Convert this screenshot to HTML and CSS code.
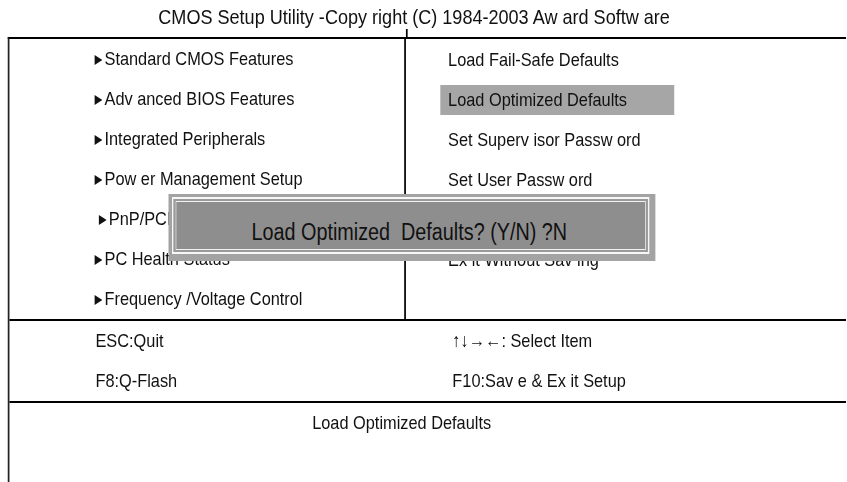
FILE: index.html
```html
<!DOCTYPE html>
<html lang="en">
<head>
  <meta charset="UTF-8">
  <title>CMOS Setup Utility</title>
  <link rel="stylesheet" href="styles.css">
</head>
<body>
  <div class="page">
    <div class="screen">
      <div class="title">CMOS Setup Utility -Copy right (C) 1984-2003 Aw ard Softw are</div>
      <div class="panel">
        <div class="menu">
          <ul class="menu-left">
            <li class="arrow">Standard CMOS Features</li>
            <li class="arrow">Adv anced BIOS Features</li>
            <li class="arrow">Integrated Peripherals</li>
            <li class="arrow">Pow er Management Setup</li>
            <li class="arrow indent">PnP/PCI Configurations</li>
            <li class="arrow">PC Health Status</li>
            <li class="arrow">Frequency /Voltage Control</li>
          </ul>
          <ul class="menu-right">
            <li><span>Load Fail-Safe Defaults</span></li>
            <li class="selected"><span>Load Optimized Defaults</span></li>
            <li><span>Set Superv isor Passw ord</span></li>
            <li><span>Set User Passw ord</span></li>
            <li><span>Save &amp; Exit Setup</span></li>
            <li><span>Ex it Without Sav ing</span></li>
            <li></li>
          </ul>
        </div>
        <div class="keys">
          <div>ESC:Quit</div>
          <div class="key-right">↑↓→←: Select Item</div>
          <div>F8:Q-Flash</div>
          <div class="key-right">F10:Sav e &amp; Ex it Setup</div>
        </div>
        <div class="status">Load Optimized Defaults</div>

        <!-- confirm box over the menu -->
        <div class="dialog">
          <div class="dialog-frame">
            <div class="dialog-body">Load Optimized&nbsp; Defaults? (Y/N) ?N</div>
          </div>
        </div>
      </div>
    </div>
  </div>
</body>
</html>
```

FILE: styles.css
```css
body { margin:0; background:#fff; color:#111; font-family:"Liberation Sans",Arial,sans-serif; font-size:19px; }
.page { width:847px; height:482px; overflow:hidden; }
/* the whole screen is squeezed sideways to get the narrow print look */
.screen { width:984px; transform:scaleX(.86); transform-origin:0 0; }
.title { width:963px; height:37px; line-height:33px; text-align:center; font-size:21px; }
.panel { position:relative; margin-left:9px; border-left:2px solid #222; border-top:2px solid #000; }
.panel::before { content:""; position:absolute; left:461px; top:-10px; width:1.5px; height:9px; background:#000; }
ul { list-style:none; margin:0; padding:0; }
.menu { display:grid; grid-template-columns:461px 1fr; }
.menu-left { border-right:2px solid #000; }
.menu li { height:40px; line-height:40px; white-space:nowrap; }
.menu-left li { padding-left:99px; }
.menu-left li.indent { padding-left:104px; }
.arrow::before { content:""; display:inline-block; border-left:9px solid #111; border-top:5.5px solid transparent; border-bottom:5.5px solid transparent; margin-right:2.5px; }
.menu-right li { padding-left:40px; }
.menu-right span { display:inline-block; box-sizing:border-box; width:272px; padding-left:9px; line-height:30px; vertical-align:middle; }
.menu-right .selected span { background:#a6a6a6; }
.keys { display:grid; grid-template-columns:463px 1fr; border-top:2px solid #000; }
.keys div { height:40px; line-height:40px; padding-left:100px; white-space:nowrap; }
.keys .key-right { padding-left:52px; }
.status { height:80px; line-height:40px; padding-left:352px; border-top:2px solid #000; }
.dialog { position:absolute; left:185px; top:155px; width:566px; height:67px; box-sizing:border-box; padding:3px 7px 7px 3.5px; background:#a3a3a3; }
.dialog-frame { height:100%; box-sizing:border-box; border:2px solid #f7f7f7; }
.dialog-body { height:100%; box-sizing:border-box; display:flex; align-items:center; padding:14px 0 0 89px; border:2px solid #9a9a9a; box-shadow:inset 0 0 0 1px #f2f2f2; background:#8e8e8e; font-size:23px; white-space:nowrap; }
```
